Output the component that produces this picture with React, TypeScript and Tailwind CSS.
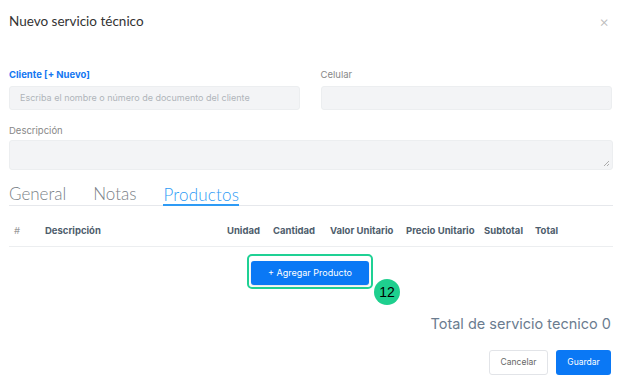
const App = () => {
  const cols = [
    { label: '#', w: 'w-[36px] pl-[5px]' },
    { label: 'Descripción', w: 'flex-1' },
    { label: 'Unidad', w: 'w-[46px]' },
    { label: 'Cantidad', w: 'w-[57px]' },
    { label: 'Valor Unitario', w: 'w-[76px]' },
    { label: 'Precio Unitario', w: 'w-[78px]' },
    { label: 'Subtotal', w: 'w-[51px]' },
    { label: 'Total', w: 'w-[78px]' },
  ];

  return (
    <div className="w-[621px] h-[391px] bg-white font-['Inter',sans-serif] overflow-hidden">
      {/* Header */}
      <div className="flex items-center justify-between pl-[9px] pr-[12px] h-[42px]">
        <h1 className="text-[13.5px] text-[#333] font-['Lato',sans-serif]">Nuevo servicio técnico</h1>
        <button className="text-[#bbb] text-[15px] leading-none font-light">×</button>
      </div>

      {/* Form */}
      <div className="px-[9px] pt-[27px]">
        <div className="grid grid-cols-2 gap-x-[20px]">
          <div>
            <label className="block text-[9.5px] font-bold text-[#1377f1] leading-[12px] mb-[5px]">Cliente [+ Nuevo]</label>
            <div className="h-[24px] rounded-[3px] bg-[#f3f4f6] border border-[#eceef0] flex items-center px-[10px] text-[9px] text-[#b0b4ba] w-[291px]">
              Escriba el nombre o número de documento del cliente
            </div>
          </div>
          <div>
            <label className="block text-[9.5px] text-[#888] leading-[12px] mb-[5px]">Celular</label>
            <div className="h-[24px] rounded-[3px] bg-[#f3f4f6] border border-[#eceef0] w-[291px]" />
          </div>
        </div>

        <label className="block text-[9.5px] text-[#888] leading-[12px] mt-[15px] mb-[3px]">Descripción</label>
        <div className="relative h-[30px] rounded-[3px] bg-[#f3f4f6] border border-[#eceef0] w-[604px]">
          <svg className="absolute right-[2px] bottom-[2px]" width="7" height="7" viewBox="0 0 7 7">
            <path d="M6 1 1 6M6 4 4 6" stroke="#999" strokeWidth="0.8" />
          </svg>
        </div>

        {/* Tabs */}
        <div className="flex items-end gap-[27px] mt-[15px] border-b border-[#e6e8ec] w-[604px] font-['Lato',sans-serif] text-[17px] leading-[18px] font-light">
          <span className="text-[#7a7f87] pb-[2px]">General</span>
          <span className="text-[#7a7f87] pb-[2px]">Notas</span>
          <span className="text-[#2e9bf5] border-b-[2px] border-[#2e9bf5] -mb-px tracking-[0.2px]">Productos</span>
        </div>

        {/* Table header */}
        <div className="flex items-end pb-[9px] h-[41px] border-b border-[#eceef0] w-[604px] text-[9.5px] leading-[12px] font-bold text-[#4e5d6c]">
          {cols.map((c) => (
            <div key={c.label} className={c.w}>
              <span className={c.label === '#' ? 'font-normal text-[#999]' : ''}>{c.label}</span>
            </div>
          ))}
        </div>

        {/* Add product */}
        <div className="flex justify-center pt-[7px] w-[604px] pr-[2px]">
          <div className="relative">
            <div className="p-[2px] rounded-[5px] border-2 border-[#1fd194]">
              <button className="w-[118px] h-[24px] rounded-[3px] bg-[#0a78f5] text-white text-[9px] shadow-sm">
                + Agregar Producto
              </button>
            </div>
            <div className="absolute left-[127px] top-[25px] w-[26px] h-[26px] rounded-full bg-[#1ecf8e] flex items-center justify-center text-[14px] text-black font-['Liberation_Sans',sans-serif]">
              12
            </div>
          </div>
        </div>

        {/* Total */}
        <div className="w-[602px] text-right text-[14.5px] text-[#6b7c8f] mt-[24px]">Total de servicio tecnico 0</div>

        {/* Footer */}
        <div className="flex justify-end gap-[8px] w-[602px] mt-[15px]">
          <button className="w-[59px] h-[25px] rounded-[3px] border border-[#e2e4e8] bg-white text-[8.5px] text-[#666]">Cancelar</button>
          <button className="w-[55px] h-[25px] rounded-[3px] bg-[#0a78f5] text-[8.5px] text-white">Guardar</button>
        </div>
      </div>
    </div>
  );
};

export default App;
